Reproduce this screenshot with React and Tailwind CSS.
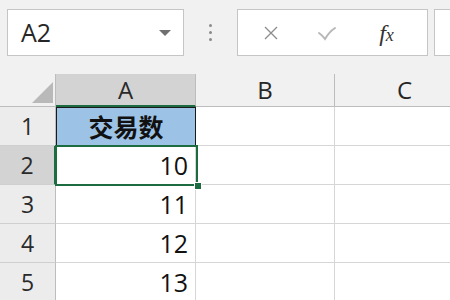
export default function App() {
  const font = { fontFamily: '"Open Sans", "Noto Sans", "Liberation Sans", sans-serif' };
  const rows = [
    { n: 1, v: "交易数" },
    { n: 2, v: "10" },
    { n: 3, v: "11" },
    { n: 4, v: "12" },
    { n: 5, v: "13" },
  ];
  return (
    <div className="w-[450px] h-[300px] overflow-hidden bg-[#f1f1f1] text-[#222]" style={font}>
      {/* toolbar */}
      <div className="h-[74px] flex items-start pt-[9px] pl-[7px] overflow-hidden">
        <div className="shrink-0 w-[177px] h-[47px] bg-white border border-[#c5c5c5] flex items-center pl-[13px] pr-[12px]">
          <span className="text-[25px] text-[#262626] leading-none">A2</span>
          <div className="ml-auto w-0 h-0 border-l-[6px] border-r-[6px] border-t-[6px] border-l-transparent border-r-transparent border-t-[#707070]" />
        </div>
        <div className="shrink-0 w-[53px] h-[47px] flex flex-col items-center justify-center gap-[4px]">
          <div className="w-[3px] h-[3px] rounded-full bg-[#8a8a8a]" />
          <div className="w-[3px] h-[3px] rounded-full bg-[#8a8a8a]" />
          <div className="w-[3px] h-[3px] rounded-full bg-[#8a8a8a]" />
        </div>
        <div className="shrink-0 w-[191px] h-[47px] bg-white border border-[#c5c5c5] flex items-center">
          <div className="w-[66px] flex justify-center">
            <svg width="16" height="16" viewBox="0 0 16 16">
              <path d="M2 2 L14 14 M14 2 L2 14" stroke="#8c8c8c" strokeWidth="1.3" fill="none" />
            </svg>
          </div>
          <div className="w-[46px] flex justify-center">
            <svg width="20" height="16" viewBox="0 0 20 16">
              <path d="M2 8 Q5 10 8 14 Q12 7 18 3" stroke="#b8b8b8" strokeWidth="2" fill="none" strokeLinecap="round" />
            </svg>
          </div>
          <div className="flex-1 flex justify-center items-center pr-[4px]">
            <span className="text-[24px] italic text-[#333] leading-none" style={{ fontFamily: '"Liberation Serif", serif' }}>
              f<span className="text-[18px]">x</span>
            </span>
          </div>
        </div>
        <div className="shrink-0 ml-[6px] w-[30px] h-[47px] bg-white border border-[#c5c5c5] border-r-0" />
      </div>
      {/* grid */}
      <div className="grid grid-cols-[56px_140px_139px_140px] grid-rows-[33px_39px_39px_39px_39px_39px] relative">
        {/* header row */}
        <div className="bg-[#f1f1f1] border-b border-r border-[#bdbdbd] relative">
          <svg className="absolute left-[32px] top-[8px]" width="21" height="21" viewBox="0 0 21 21">
            <polygon points="21,0 21,21 0,21" fill="#b9b9b9" />
          </svg>
        </div>
        <div className="bg-[#d3d3d3] border-b-2 border-b-[#1d6b40] border-r border-r-[#bdbdbd] flex items-center justify-center text-[24px] text-[#2a2a2a] leading-none">
          A
        </div>
        <div className="bg-[#f1f1f1] border-b border-r border-[#bdbdbd] flex items-center justify-center text-[24px] text-[#262626] leading-none">
          B
        </div>
        <div className="bg-[#f1f1f1] border-b border-r border-[#bdbdbd] flex items-center justify-center text-[24px] text-[#262626] leading-none">
          C
        </div>
        {rows.map((r) => (
          <Row key={r.n} r={r} />
        ))}
        {/* selection overlay on A2 */}
        <div className="absolute left-[55px] top-[71px] w-[143px] h-[41px] border-2 border-[#1d6b40] pointer-events-none">
          <div className="absolute right-[-6px] bottom-[-6px] w-[8px] h-[8px] bg-[#1d6b40] border border-white" />
        </div>
      </div>
    </div>
  );
}

function Row({ r }) {
  const sel = r.n === 2;
  const header = (
    <div
      className={
        "border-b border-[#cfcfcf] flex items-center justify-center text-[23px] leading-none text-[#2a2a2a] " +
        (sel ? "bg-[#d3d3d3] border-r-2 border-r-[#1d6b40]" : "bg-[#ececec] border-r border-r-[#bdbdbd]")
      }
    >
      {r.n}
    </div>
  );
  if (r.n === 1) {
    return (
      <>
        {header}
        <div
          className="bg-[#9cc3e6] border border-[#1a1a1a] flex items-center justify-center text-[25px] font-bold text-[#111] leading-none"
          style={{ fontFamily: '"Noto Sans CJK SC", sans-serif' }}
        >
          {r.v}
        </div>
        <div className="bg-white border-b border-r border-[#d6d6d6]" />
        <div className="bg-white border-b border-r border-[#d6d6d6]" />
      </>
    );
  }
  return (
    <>
      {header}
      <div className="bg-white border-b border-r border-[#d6d6d6] flex items-center justify-end pr-[7px] text-[25px] text-[#111] leading-none">
        {r.v}
      </div>
      <div className="bg-white border-b border-r border-[#d6d6d6]" />
      <div className="bg-white border-b border-r border-[#d6d6d6]" />
    </>
  );
}
